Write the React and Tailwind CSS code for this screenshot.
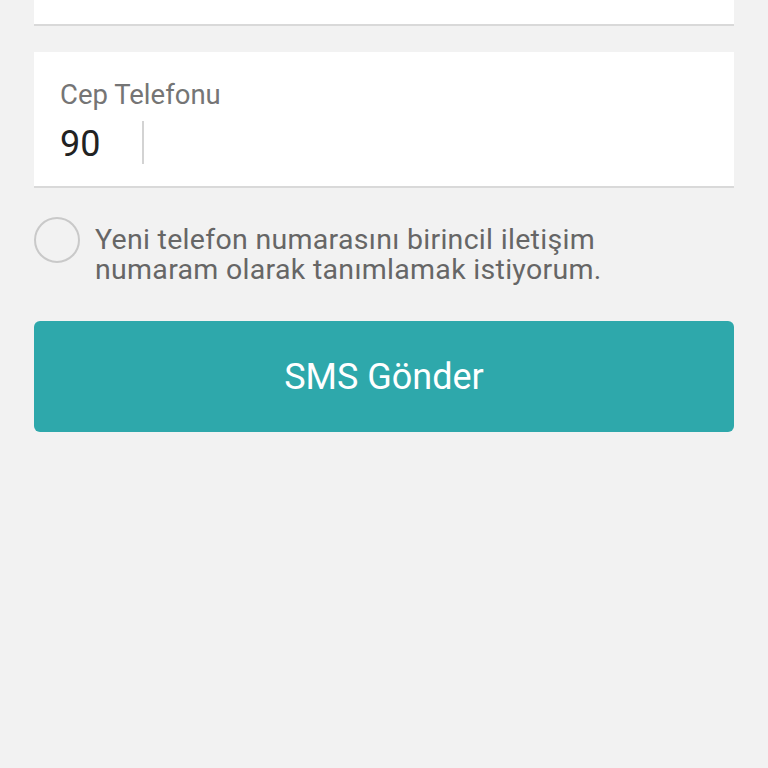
import { useState } from "react"

export default function App() {
  const [primary, setPrimary] = useState(false)
  const [phone, setPhone] = useState("")

  return (
    <div className="min-h-screen bg-[#f2f2f2] px-[34px] font-['Roboto',sans-serif]">
      {/* previous field, scrolled out of view */}
      <div className="h-[26px] bg-white border-b-2 border-[#d9d9d9]" />

      {/* phone field */}
      <div className="mt-[26px] h-[136px] bg-white border-b-2 border-[#d9d9d9] px-[26px] pt-[28px]">
        <div className="text-[27.5px] leading-[30px] text-[#757575]">Cep Telefonu</div>
        <div className="mt-[5px] flex items-center">
          <span className="pt-[4px] text-[36px] leading-[44px] text-[#222]">90</span>
          <span className="ml-[42px] w-[2px] h-[43px] bg-[#d3d3d3]" />
          <input
            value={phone}
            onChange={(e) => setPhone(e.target.value)}
            className="ml-3 flex-1 bg-transparent outline-none text-[36px] text-[#222]"
          />
        </div>
      </div>

      {/* primary number option */}
      <label className="mt-[28px] flex items-start cursor-pointer">
        <input
          type="checkbox"
          checked={primary}
          onChange={() => setPrimary(!primary)}
          className="hidden"
        />
        <span className="mt-[1px] w-[46px] h-[46px] shrink-0 rounded-full border-2 border-[#c9c9c9]" />
        <div className="mt-[9px] ml-[15px] text-[28.5px] tracking-[0.3px] text-[#666]">
          <div className="leading-[29px]">Yeni telefon numarasını birincil iletişim</div>
          <div className="mt-[1px] leading-[29px]">numaram olarak tanımlamak istiyorum.</div>
        </div>
      </label>

      <button className="mt-[37px] w-full h-[111px] rounded-[6px] bg-[#2ea8ab] text-white text-[36px]">
        SMS Gönder
      </button>
    </div>
  )
}
